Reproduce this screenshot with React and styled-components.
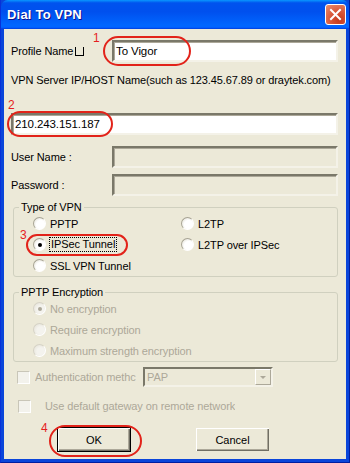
import React from "react";
import styled, { createGlobalStyle } from "styled-components";

const Global = createGlobalStyle`
  html, body { margin:0; padding:0; background:#fff; }
  body { font-family:"Liberation Sans", Arial, sans-serif; }
`;

const Win = styled.div`
  width:350px;
  height:463px;
  box-sizing:border-box;
  background:#0A45DA;
  border-left:1px solid #0831D9;
  border-right:1px solid #001EA0;
  border-bottom:1px solid #001EA0;
  display:flex;
  flex-direction:column;
`;

const TitleBar = styled.div`
  height:29px;
  flex:none;
  display:flex;
  align-items:center;
  justify-content:space-between;
  padding:0 3px 0 6px;
  background:linear-gradient(#0997FF 0%, #0053EE 10%, #0050EE 40%, #0066FF 86%, #0066FF 92%, #005BFF 95%, #003DD7 100%);
  border-radius:7px 7px 0 0;
`;

const Title = styled.div`
  color:#fff;
  font-weight:bold;
  font-size:13px;
  text-shadow:1px 1px #0F1089;
  letter-spacing:0.2px;
`;

const Close = styled.div`
  width:19px;
  height:19px;
  border:1px solid #fff;
  border-radius:3px;
  background:radial-gradient(circle at 70% 80%, #C4391C 0%, #D8573A 45%, #E9906F 100%);
  display:flex;
  align-items:center;
  justify-content:center;
`;

const Body = styled.div`
  flex:1;
  margin:0 3px 3px 3px;
  background:#ECE9D8;
  position:relative;
  padding:11px 8px 0 7px;
  font-size:11px;
  letter-spacing:-0.1px;
  color:#000;
`;

const Row = styled.div`
  display:flex;
  align-items:center;
  height:22px;
  margin-top:${p => p.mt || 0}px;
`;

const Label = styled.div`
  width:101px;
  flex:none;
  display:flex;
  align-items:center;
`;

const Blank = styled.span`
  display:inline-block;
  width:7px;
  height:8px;
  margin-left:2px;
  margin-top:1px;
  border:1px solid #000;
  border-top:none;
`;

const Line = styled.div`
  height:14px;
  line-height:14px;
  margin-top:${p => p.mt || 0}px;
`;

const Input = styled.div`
  flex:1;
  height:22px;
  box-sizing:border-box;
  background:${p => (p.disabled ? "#ECE9D8" : "#fff")};
  border:2px solid;
  border-color:#7A7869 #F4F2E8 #F4F2E8 #7A7869;
  box-shadow:inset 1px 1px 0 #ACA899;
  padding:0 2px;
  line-height:18px;
  font-size:11.5px;
`;

const Group = styled.fieldset`
  margin:${p => p.mt || 0}px 0 0 2px;
  padding:0 0 ${p => p.pb || 0}px 0;
  border:1px solid #D0D0BF;
  border-radius:3px;
  min-width:0;
`;

const Legend = styled.legend`
  margin-left:5px;
  padding:0 2px;
  line-height:12px;
`;

const RadioGrid = styled.div`
  display:grid;
  grid-template-columns:148px 1fr;
  grid-auto-rows:21px;
  padding-left:19px;
`;

const RadioItem = styled.div`
  display:flex;
  align-items:center;
  grid-column:${p => p.col || "auto"};
  color:${p => (p.disabled ? "#ACA899" : "#000")};
`;

const Circle = styled.span`
  width:11px;
  height:11px;
  flex:none;
  border-radius:50%;
  border:1px solid;
  border-color:${p => (p.disabled ? "#D6D3C6 #fff #fff #D6D3C6" : "#A7A494 #fff #fff #A7A494")};
  background:${p => (p.disabled ? "radial-gradient(circle at 60% 60%, #F4F3EE 40%, #E2DFD3 100%)" : "radial-gradient(circle at 60% 60%, #fff 45%, #DCD9CB 100%)")};
  display:flex;
  align-items:center;
  justify-content:center;
  margin-right:4px;
  &::after {
    content:"";
    width:4px;
    height:4px;
    border-radius:50%;
    background:${p => (p.checked ? (p.disabled ? "#ACA899" : "#000") : "transparent")};
  }
`;

const Focus = styled.span`
  outline:1px dotted #000;
  outline-offset:0px;
  padding:0 1px;
  line-height:13px;
`;

const CheckRow = styled.div`
  display:flex;
  align-items:center;
  height:20px;
  margin-top:${p => p.mt || 0}px;
  padding-left:${p => p.pl || 0}px;
  color:#ACA899;
`;

const Box = styled.span`
  width:11px;
  height:11px;
  flex:none;
  border:1px solid;
  border-color:#C9C6B8 #fff #fff #C9C6B8;
  background:#F3F2EC;
  margin-right:${p => p.gap || 5}px;
`;

const CheckText = styled.span`
  width:${p => (p.w ? `${p.w}px` : "auto")};
  flex:none;
  white-space:nowrap;
  overflow:hidden;
`;

const Select = styled.div`
  width:130px;
  height:20px;
  box-sizing:border-box;
  border:2px solid;
  border-color:#7A7869 #F4F2E8 #F4F2E8 #7A7869;
  display:flex;
  align-items:center;
  justify-content:space-between;
  padding-left:2px;
  color:#ACA899;
`;

const Arrow = styled.span`
  width:16px;
  height:16px;
  box-sizing:border-box;
  border:1px solid;
  border-color:#fff #ACA899 #ACA899 #fff;
  background:#ECE9D8;
  display:flex;
  align-items:center;
  justify-content:center;
  &::after {
    content:"";
    border-left:3px solid transparent;
    border-right:3px solid transparent;
    border-top:3px solid #ACA899;
  }
`;

const Buttons = styled.div`
  display:flex;
  margin-top:11px;
  padding-left:46px;
  gap:64px;
`;

const Button = styled.div`
  width:${p => p.w || 74}px;
  height:25px;
  box-sizing:border-box;
  display:flex;
  align-items:center;
  justify-content:center;
  background:#ECE9D8;
  border:1px solid ${p => (p.primary ? "#000" : "transparent")};
  box-shadow:inset 1px 1px 0 #fff, inset -1px -1px 0 #716F64, inset -2px -2px 0 #ACA899;
  letter-spacing:0;
`;

const Mark = styled.div`
  position:absolute;
  left:${p => p.x}px;
  top:${p => p.y}px;
  color:#E51E1E;
  font-size:12px;
  line-height:12px;
  letter-spacing:0;
`;

const Ring = styled.div`
  position:absolute;
  left:${p => p.x}px;
  top:${p => p.y}px;
  width:${p => p.w}px;
  height:${p => p.h}px;
  box-sizing:border-box;
  border:2px solid #E2231A;
  border-radius:${p => p.h / 2}px;
  pointer-events:none;
`;

export default function App() {
  return (
    <>
      <Global />
      <Win>
        <TitleBar>
          <Title>Dial To VPN</Title>
          <Close>
            <svg width="13" height="13" viewBox="0 0 13 13">
              <path d="M2 2 L11 11 M11 2 L2 11" stroke="#fff" strokeWidth="2" strokeLinecap="square" />
            </svg>
          </Close>
        </TitleBar>
        <Body>
          <Row>
            <Label>Profile Name<Blank /></Label>
            <Input>To Vigor</Input>
          </Row>
          <Line mt={11}>VPN Server IP/HOST Name(such as 123.45.67.89 or draytek.com)</Line>
          <Row mt={26}>
            <Input>210.243.151.187</Input>
          </Row>
          <Row mt={11}>
            <Label>User Name :</Label>
            <Input disabled />
          </Row>
          <Row mt={6}>
            <Label>Password :</Label>
            <Input disabled />
          </Row>

          <Group mt={5}>
            <Legend>Type of VPN</Legend>
            <RadioGrid>
              <RadioItem><Circle />PPTP</RadioItem>
              <RadioItem><Circle />L2TP</RadioItem>
              <RadioItem><Circle checked /><Focus>IPSec Tunnel</Focus></RadioItem>
              <RadioItem><Circle />L2TP over IPSec</RadioItem>
              <RadioItem><Circle />SSL VPN Tunnel</RadioItem>
            </RadioGrid>
          </Group>

          <Group mt={9}>
            <Legend>PPTP Encryption</Legend>
            <RadioGrid>
              <RadioItem col="1 / span 2" disabled><Circle disabled checked />No encryption</RadioItem>
              <RadioItem col="1 / span 2" disabled><Circle disabled />Require encryption</RadioItem>
              <RadioItem col="1 / span 2" disabled><Circle disabled />Maximum strength encryption</RadioItem>
            </RadioGrid>
          </Group>

          <CheckRow mt={5} pl={6}>
            <Box />
            <CheckText w={108}>Authentication methc</CheckText>
            <Select>
              PAP
              <Arrow />
            </Select>
          </CheckRow>

          <CheckRow mt={9} pl={7}>
            <Box gap={14} />
            <CheckText>Use default gateway on remote network</CheckText>
          </CheckRow>

          <Buttons>
            <Button primary w={74}>OK</Button>
            <Button w={75}>Cancel</Button>
          </Buttons>

          <Mark x={89} y={3}>1</Mark>
          <Ring x={99} y={7} w={88} h={30} />
          <Mark x={4} y={70}>2</Mark>
          <Ring x={3} y={82} w={106} h={26} />
          <Mark x={16} y={200}>3</Mark>
          <Ring x={22} y={205} w={102} h={22} />
          <Mark x={37} y={393}>4</Mark>
          <Ring x={45} y={396} w={93} h={32} />
        </Body>
      </Win>
    </>
  );
}
